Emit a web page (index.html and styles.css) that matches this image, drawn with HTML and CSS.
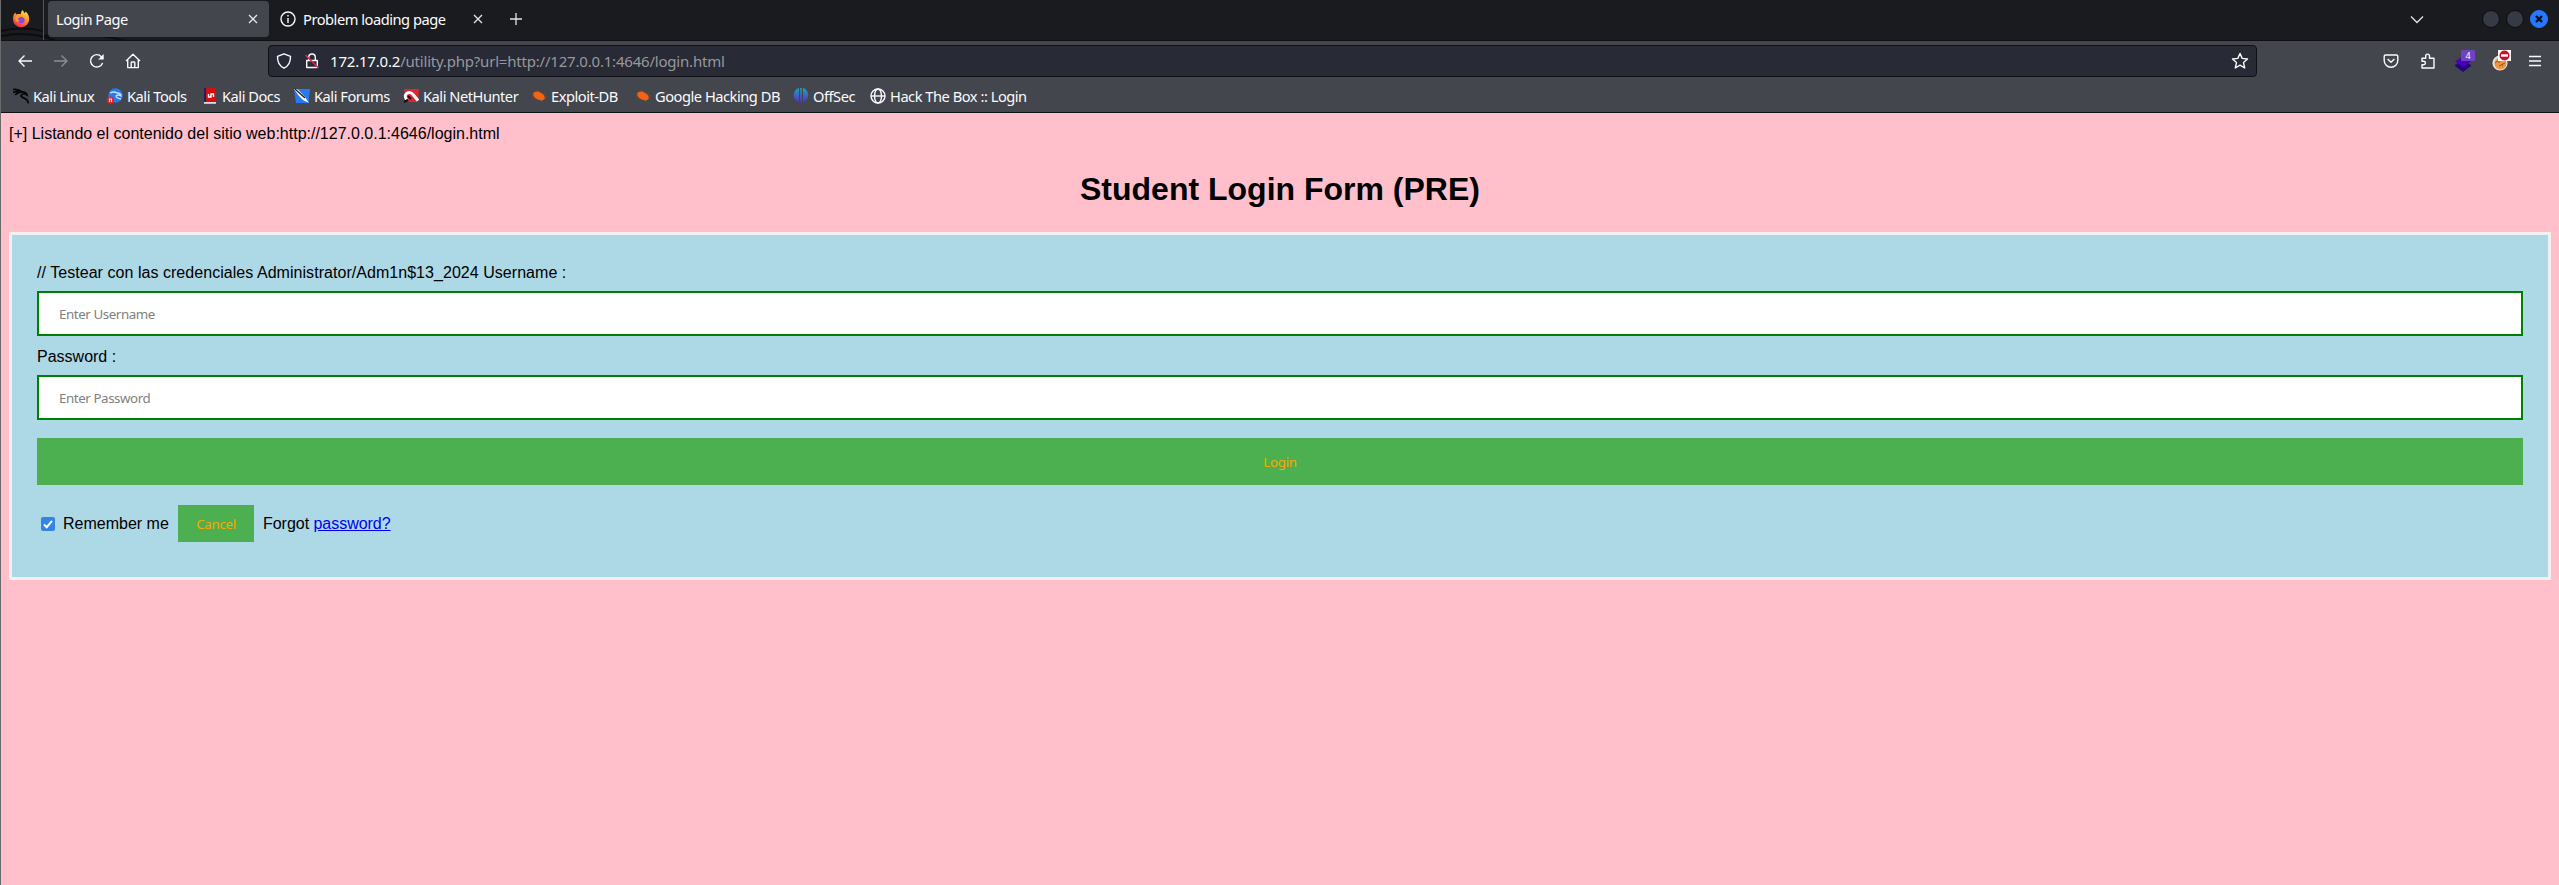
FILE: index.html
```html
<!DOCTYPE html>
<html lang="es">
<head>
<meta charset="utf-8">
<title>Login Page</title>
<link rel="stylesheet" href="styles.css">
</head>
<body>
<div class="window">
  <header class="chrome">
    <div class="tabs">
      <svg class="deco" width="200" height="41" viewBox="0 0 200 41"><path d="M0 31Q22 26 42 31M0 36Q30 30 55 41M42 36Q85 30 125 41" fill="none" stroke="#0c0d10" stroke-width="2"/></svg>
      <div class="launcher">
        <svg width="18" height="18" viewBox="0 0 18 18"><defs><linearGradient id="fx" x1="0.8" y1="0" x2="0.3" y2="1"><stop offset="0" stop-color="#ffe84a"/><stop offset=".5" stop-color="#ff8a2a"/><stop offset="1" stop-color="#f0245c"/></linearGradient></defs><path d="M10.5 0c1 1 1.500 2 1.700 3 1-.2 1.400-1 1.500-1.500 2 1.700 3.500 4.300 3.500 7.500a8.100 8.100 0 0 1-16.200.4C.8 6.500 1.800 4 3.300 2.600c.2.900.5 1.400 1 1.900C6 4 7.500 4 8.800 4.300 8.800 2.800 9.300 1.200 10.500 0z" fill="url(#fx)"/><path d="M6 8.500c.8-1.300 2-1 2.700-2 .5.400 3.800.8 4 3.200.1 2-1.400 3.500-3.400 3.500S6 11.800 5.800 10z" fill="#8648e0"/><path d="M4 6c2-.9 4-.3 4.800.8-1 .7-2 .3-2.800 1.900-.5 1 .5 2 2 1.900C6 13 3 11 3 8.500z" fill="#ff9a2a"/></svg>
      </div>
      <div class="tab active"><span>Login Page</span><svg class="x" width="10" height="10" viewBox="0 0 10 10"><path d="M1 1l8 8M9 1L1 9"/></svg></div>
      <div class="tab idle"><svg class="line" width="16" height="16" viewBox="0 0 16 16"><circle cx="8" cy="8" r="7"/><path d="M8 7v5M8 4v1.500"/></svg><span>Problem loading page</span><svg class="x" width="10" height="10" viewBox="0 0 10 10"><path d="M1 1l8 8M9 1L1 9"/></svg></div>
      <svg class="x plus" width="12" height="12" viewBox="0 0 12 12"><path d="M6 0v12M0 6h12"/></svg>
      <div class="wm">
        <svg class="x chev" width="14" height="9" viewBox="0 0 14 9"><path d="M1 1.500l6 6 6-6"/></svg>
        <i class="dot"></i><i class="dot"></i>
        <i class="dot close"><svg width="8" height="8" viewBox="0 0 8 8"><path d="M1 1l6 6M7 1L1 7" stroke="#0b1020" stroke-width="2.300"/></svg></i>
      </div>
    </div>
    <div class="nav">
      <div class="buttons">
        <svg class="line" width="16" height="16" viewBox="0 0 16 16"><path d="M15 8H2M7.500 2.500L2 8l5.500 5.500"/></svg>
        <svg class="line dim" width="16" height="16" viewBox="0 0 16 16"><path d="M1 8h13M8.500 2.500L14 8l-5.500 5.500"/></svg>
        <svg class="line" width="16" height="16" viewBox="0 0 16 16"><path d="M13.600 10A6.200 6.200 0 1 1 12.400 3.700l1.500 1.600"/><path d="M14.700 1v5.500H9.200z" fill="#fbfbfe" stroke="none"/></svg>
        <svg class="line" width="16" height="16" viewBox="0 0 16 16"><path d="M1 8l7-6.700L15 8M2.700 7v7.600h10.600V7M6.200 14.500V9.700q0-.7.700-.7h2.200q.7 0 .7.700v4.800"/></svg>
      </div>
      <div class="url">
        <svg class="line" width="16" height="16" viewBox="0 0 16 16"><path d="M8 .8L14.500 3.400C14.700 8.500 12.500 13 8 15.200 3.500 13 1.300 8.500 1.500 3.400z"/></svg>
        <svg class="line lock" width="16" height="16" viewBox="0 0 16 16"><path d="M4.700 7V4.300a3.300 3.300 0 0 1 6.600 0V7M2.700 7.500h10.600v7H2.700z"/><path d="M1.500 2l13 13" stroke="#e22850" stroke-width="1.600"/></svg>
        <span class="addr"><b>172.17.0.2</b>/utility.php?url=http://127.0.0.1:4646/login.html</span>
        <svg class="line star" width="18" height="18" viewBox="0 0 18 18"><path d="M9 1.500l2.200 4.900 5.300.6-4 3.600 1.200 5.400L9 13.200 4.300 16l1.200-5.400-4-3.600 5.300-.6z"/></svg>
      </div>
      <div class="ext">
        <svg class="line pocket" width="16" height="16" viewBox="0 0 16 16"><path d="M2.500 2h11q1.300 0 1.300 1.300V7.500a6.800 6.800 0 0 1-13.600 0V3.300Q1.200 2 2.500 2zM4.600 6l3.400 3.300L11.400 6"/></svg>
        <svg class="line puzzle" width="16" height="18" viewBox="0 0 16 18"><path d="M2 6.200h3.700V4a1.900 1.900 0 0 1 3.800 0v2.200H14V16H2v-3.300h1.700a1.700 1.700 0 0 0 0-3.400H2z"/></svg>
        <svg class="layers" width="22" height="24" viewBox="0 0 22 24"><path d="M1 16l8-5 8 5v1l-8 6-8-6z" fill="#21077b"/><path d="M1 12.500l8-5.500 8 5.500-8 5.500z" fill="#4a00b5"/><rect x="7" y="1" width="14" height="11" rx="1" fill="#6f42c1"/><text x="14" y="10" text-anchor="middle" class="badge">4</text></svg>
        <svg class="cookie" width="22" height="24" viewBox="0 0 22 24"><circle cx="10" cy="14" r="7.600" fill="#e5e1d8"/><circle cx="10.500" cy="14.500" r="6" fill="#f0973c"/><path d="M5 14l4-3M9 17l6-3M8 13h2M12 17h1" stroke="#8a4f22"/><rect x="8" y="1" width="13" height="11" fill="#fff"/><circle cx="14.500" cy="6.500" r="5" fill="#c8102e"/><rect x="11" y="5.300" width="7" height="2.400" fill="#fff"/></svg>
        <svg class="line" width="14" height="14" viewBox="0 0 14 14"><path d="M1 2.500h12M1 7h12M1 11.500h12"/></svg>
      </div>
    </div>
    <nav class="marks">
      <a><svg width="16" height="16" viewBox="0 0 16 16"><path d="M0 1.500Q5 .5 9 4M0 4.500q4-2 9-.5M2 7q3-3 7-3M8 4q5-.5 6 3-4-2.500-6 .5c-1 3 6.500 1 7.500 8" fill="none" stroke="#050607" stroke-width="1.700"/></svg><span>Kali Linux</span></a>
      <a><svg width="16" height="16" viewBox="0 0 16 16"><circle cx="8.500" cy="7.500" r="7.200" fill="#2878ef"/><path d="M3 5q4-2 7 0 4 0 4 3-3-2-5 0 0 2 5 3" fill="none" stroke="#c5e1ff" stroke-width="1.300"/><circle cx="3.500" cy="12" r="3.500" fill="#e4292e"/><path d="M2 11h3M2.700 11v3M4.500 11v3" stroke="#fff" stroke-width=".8"/></svg><span>Kali Tools</span></a>
      <a><svg width="16" height="16" viewBox="0 0 16 16"><path d="M2 0h12v14H2z" fill="#d40f13"/><path d="M2 0h2v14H2z" fill="#192653"/><path d="M2 14h12v1.800H2z" fill="#ddd"/><path d="M11.500 9V6H9v3H6.500V6" fill="none" stroke="#fff" stroke-width="1.400"/></svg><span>Kali Docs</span></a>
      <a><svg width="16" height="16" viewBox="0 0 16 16"><path d="M0 1h16l-1.500 14H2z" fill="#247af0"/><path d="M0 1l4 .5L11 9l4 6-6-3-4-4z" fill="#fff"/><path d="M1 1l10 9" stroke="#16191f" stroke-width="1.200"/></svg><span>Kali Forums</span></a>
      <a><svg width="16" height="16" viewBox="0 0 16 16"><path d="M1 1h15l-1 13H4z" fill="#df2432"/><path d="M3.500 11.500c-4-6 3-9 6.500-5l5 6" fill="none" stroke="#fff" stroke-width="3"/><path d="M1 14l4-2M5 8l3 3" stroke="#111" stroke-width="2"/></svg><span>Kali NetHunter</span></a>
      <a><svg width="16" height="16" viewBox="0 0 16 16"><path d="M1 5l14 6M3 11l11-6M7 2l4 12M1 8h15" stroke="#8b4a2e" stroke-width=".8"/><ellipse cx="8" cy="8" rx="6.200" ry="3.800" transform="rotate(28 8 8)" fill="#f26412"/></svg><span>Exploit-DB</span></a>
      <a><svg width="16" height="16" viewBox="0 0 16 16"><path d="M1 5l14 6M3 11l11-6M7 2l4 12M1 8h15" stroke="#8b4a2e" stroke-width=".8"/><ellipse cx="8" cy="8" rx="6.200" ry="3.800" transform="rotate(28 8 8)" fill="#f26412"/></svg><span>Google Hacking DB</span></a>
      <a><svg width="16" height="16" viewBox="0 0 16 16"><defs><linearGradient id="of" x2="0" y2="1"><stop stop-color="#18a5bd"/><stop offset="1" stop-color="#6320c5"/></linearGradient></defs><path d="M6 0v14C-1 12-1 2 6 0zM7.200 0h1.600v16H7.200zM10 0c7 2 7 12 0 14z" fill="url(#of)"/></svg><span>OffSec</span></a>
      <a><svg class="line" width="16" height="16" viewBox="0 0 16 16"><circle cx="8" cy="8" r="7"/><ellipse cx="8" cy="8" rx="3.500" ry="7"/><path d="M1 8h14"/></svg><span>Hack The Box :: Login</span></a>
    </nav>
  </header>
  <main class="page">
    <div class="notice">[+] Listando el contenido del sitio web:http://127.0.0.1:4646/login.html</div>
    <h1>Student Login Form (PRE)</h1>
    <form class="card">
      <label class="cred">// Testear con las credenciales Administrator/Adm1n$13_2024 Username :</label>
      <input class="field" type="text" placeholder="Enter Username">
      <label class="pass">Password :</label>
      <input class="field" type="password" placeholder="Enter Password">
      <button class="login" type="button">Login</button>
      <div class="row">
        <svg class="check" width="14" height="14" viewBox="0 0 14 14"><rect width="14" height="14" rx="2" fill="#3584e4"/><path d="M3 7.500l2.700 2.700L11 3.800" fill="none" stroke="#fff" stroke-width="2"/></svg>
        <span class="remember">Remember me</span>
        <button class="cancel" type="button">Cancel</button>
        <span class="forgot">Forgot <a href="#">password?</a></span>
      </div>
    </form>
  </main>
</div>
</body>
</html>
```
FILE: styles.css
```css
* { box-sizing: border-box; }
body { margin: 0; background: #ffc0cb; }
svg { display: block; flex: none; }
.window { height: 885px; border-left: 1px solid #6b6b6b; overflow: hidden; }
.chrome { height: 113px; background: #44464d; border-bottom: 1px solid #0f1014; font: 14.667px "Noto Sans", sans-serif; letter-spacing: -0.48px; color: #fbfbfe; }
.chrome span { white-space: nowrap; }
.tabs { position: relative; height: 41px; background: #1a1b1f; border-bottom: 1px solid #0f1014; display: flex; }
.deco { position: absolute; left: 0; top: 0; }
.launcher { position: relative; width: 43px; border-right: 1px solid #55565b; padding: 10px 0 0 11px; }
.tab { position: relative; display: flex; align-items: center; height: 36px; margin-top: 1px; }
.active { width: 221px; margin-left: 4px; padding: 0 11px 0 8px; background: #44464d; border-radius: 4px; justify-content: space-between; }
.idle { width: 205px; margin-left: 11px; gap: 7px; }
.idle .x { margin-left: auto; margin-right: 2px; }
.line { fill: none; stroke: #fbfbfe; stroke-width: 1.4; stroke-linejoin: round; }
.dim { opacity: .4; }
.x { fill: none; stroke: #e5e5e8; stroke-width: 1.3; }
.plus { margin: 13px 0 0 25px; }
.wm { margin-left: auto; display: flex; padding: 10px 11px 0 0; gap: 6px; }
.chev { margin: 5px 52px 0 0; }
.dot { width: 18px; height: 18px; border-radius: 50%; background: #353a45; border: 1px solid #0b0c0f; display: flex; align-items: center; justify-content: center; }
.close { background: #2777ff; border-color: #2777ff; }
.nav { height: 40px; display: flex; align-items: center; }
.buttons { width: 267px; display: flex; gap: 20px; padding-left: 16px; }
.url { width: 1989px; height: 32px; display: flex; align-items: center; background: #282a35; border: 1px solid #101116; border-radius: 4px; padding: 0 7px; }
.lock { margin-left: 12px; }
.addr { margin-left: 10px; color: #97989e; font-size: 15px; letter-spacing: -0.2px; }
.addr b { color: #fbfbfe; font-weight: 400; }
.star { margin-left: auto; }
.ext { margin-left: auto; display: flex; align-items: center; padding-right: 17px; }
.pocket { margin-right: 21px; }
.puzzle { margin-right: 18px; }
.layers { margin-right: 14px; }
.cookie { margin-right: 16px; }
.badge { font: 9px "Noto Sans", sans-serif; fill: #fff; letter-spacing: 0; }
.marks { height: 30px; display: grid; grid-template-columns: 94px 95px 92px 109px 128px 104px 158px 77px 170px; padding-left: 12px; }
.marks a { display: flex; align-items: center; gap: 4px; }
.page { padding: 8px; font: 16px/18px "Liberation Sans", Arial, sans-serif; color: #000; }
.notice { padding-top: 4px; height: 22px; }
h1 { font-size: 32px; line-height: 37px; margin: 28px 0 24px; text-align: center; }
.card { height: 348px; margin: 0; border: 3px solid #f1f1f1; background: #add8e6; padding: 29px 25px 0; display: flex; flex-direction: column; }
.cred { height: 17px; letter-spacing: 0.045px; }
.pass { height: 17px; }
.field { flex: none; height: 45px; margin: 10px 0 12px; border: 2px solid green; padding: 0 20px; background: #fff; font: 13.333px "Noto Sans", sans-serif; letter-spacing: -0.42px; }
.field::placeholder { color: #808080; opacity: 1; }
.login { flex: none; height: 47px; margin-top: 6px; border: 0; background: #4caf50; color: orange; font: 13.333px "Noto Sans", sans-serif; letter-spacing: -0.3px; }
.row { height: 37px; margin-top: 20px; padding-left: 4px; display: flex; align-items: center; }
.remember { margin-left: 8px; width: 115px; }
.cancel { width: 76px; height: 37px; border: 0; padding: 0; background: #4caf50; color: orange; font: 13.333px "Noto Sans", sans-serif; letter-spacing: -0.3px; }
.forgot { margin-left: 9px; letter-spacing: -0.03px; }
.forgot a { color: #00e; }
```
